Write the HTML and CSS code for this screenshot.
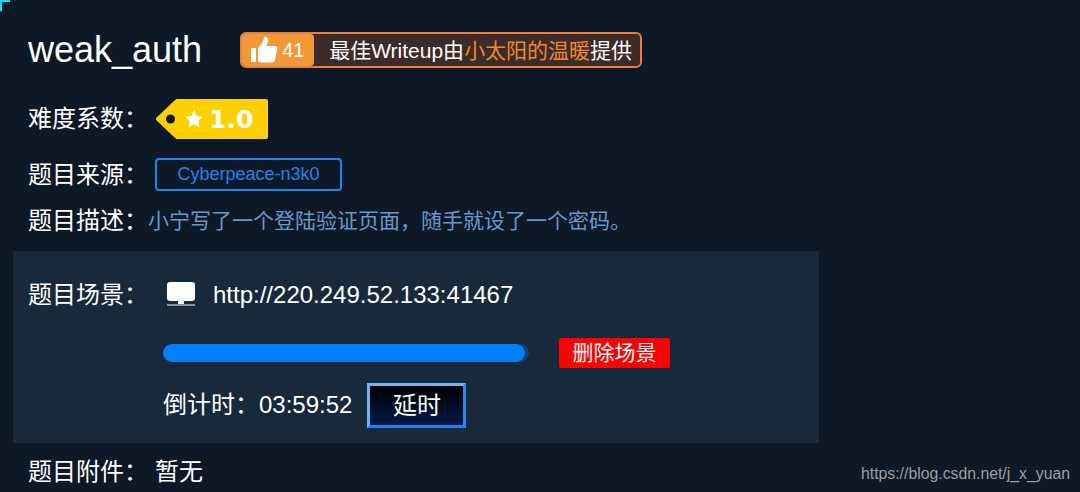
FILE: index.html
```html
<!DOCTYPE html>
<html lang="zh-CN">
<head>
  <meta charset="UTF-8">
  <title>weak_auth</title>
  <link rel="stylesheet" href="styles.css">
</head>
<body>
  <div class="corner"></div>

  <div class="task">
    <div class="title-row">
      <h1>weak_auth</h1>
      <div class="writeup">
        <span class="like">
          <svg class="thumb" viewBox="0 0 28 28" width="28" height="28">
            <path fill="#fff" d="M1 12h5v14H1z"/>
            <path fill="#fff" d="M8 12c3-3 5-6 6-10 0-2 4-2 4 2 0 2-1 5-2 6h8c3 0 4 2 3 4l-2 10c-.5 2-2 2.500-3 2.500H12c-2 0-3-1-4-1.500z"/>
          </svg>
          41
        </span>
        <span class="writeup-text">最佳Writeup由<span class="writeup-name">小太阳的温暖</span>提供</span>
      </div>
    </div>

    <div class="row row-level">
      <span class="label">难度系数&#xFF1A;</span>
      <span class="tag">
        <svg class="tag-shape" viewBox="0 0 112 40" width="112" height="40">
          <path fill="#ffd000" stroke="#ffd000" stroke-width="4" stroke-linejoin="round" d="M2 20L21 2h89v36H21z"/>
          <circle fill="#0d1927" cx="14.500" cy="20" r="4.500"/>
        </svg>
        <svg class="star" viewBox="0 0 20 20" width="20" height="20">
          <path fill="#fff" d="M10 1l2.700 6 6.300.7-4.700 4.300 1.300 6.500L10 15.200 4.400 18.500l1.300-6.500L1 7.700 7.300 7z"/>
        </svg>
        <span class="tag-value">1.0</span>
      </span>
    </div>

    <div class="row row-source">
      <span class="label">题目来源&#xFF1A;</span>
      <span class="source">Cyberpeace-n3k0</span>
    </div>

    <div class="row row-desc">
      <span class="label">题目描述&#xFF1A;</span>
      <span class="desc">小宁写了一个登陆验证页面&#xFF0C;随手就设了一个密码。</span>
    </div>

    <div class="scene">
      <div class="scene-url">
        <span class="label">题目场景&#xFF1A;</span>
        <svg class="monitor" viewBox="0 0 28 24" width="28" height="24">
          <rect fill="#fff" x="0" y="0" width="28" height="19" rx="3"/>
          <path fill="#fff" d="M11 19h6v3h-6zM0 22.500h28v1H0z"/>
        </svg>
        <span class="url">http://220.249.52.133:41467</span>
      </div>
      <div class="scene-progress">
        <div class="progress"><div class="progress-fill"></div></div>
        <button class="delete" type="button">删除场景</button>
      </div>
      <div class="scene-timer">
        <span class="timer">倒计时&#xFF1A;03:59:52</span>
        <button class="delay" type="button">延时</button>
      </div>
    </div>

    <div class="row row-attach">
      <span class="label">题目附件&#xFF1A;</span>
      <span class="attach">暂无</span>
    </div>
  </div>

  <div class="watermark">https://blog.csdn.net/j_x_yuan</div>
</body>
</html>
```

FILE: styles.css
```css
html, body {
  height: 100%;
  overflow: hidden;
}

body {
  margin: 0;
  background-color: #0d1927;
  color: #fff;
  font-family: "Liberation Sans", "Noto Sans CJK SC", sans-serif;
  font-size: 21px;
}

.corner {
  position: absolute;
  left: 0;
  top: 0;
  width: 8px;
  height: 9px;
  border-top: 2px solid #00e5ff;
  border-left: 2px solid #00e5ff;
}

.task {
  width: 806px;
  margin-left: 13px;
}

.title-row {
  display: flex;
  align-items: center;
  height: 36px;
  padding: 32px 0 0 15px;
}

h1 {
  margin: 0 38px 0 0;
  font-size: 36px;
  font-weight: normal;
  line-height: 36px;
}

.writeup {
  display: flex;
  width: 402px;
  height: 36px;
  box-sizing: border-box;
  border: 2px solid #ee7f31;
  border-radius: 6px;
  background-color: #3d2b2a;
}

.like {
  display: flex;
  align-items: center;
  gap: 4px;
  width: 72px;
  padding-left: 8px;
  box-sizing: border-box;
  background-color: #f19938;
  border-radius: 4px;
  font-size: 20px;
}

.writeup-text {
  margin-left: 15px;
  padding-top: 1px;
  line-height: 32px;
  white-space: nowrap;
}

.writeup-name {
  color: #ee8a2e;
}

.row {
  display: flex;
  align-items: center;
  padding-left: 15px;
}

.label {
  font-size: 24px;
  line-height: 30px;
  white-space: nowrap;
}

.row-level {
  height: 40px;
  padding-top: 31px;
}

.tag {
  display: flex;
  align-items: center;
  position: relative;
  width: 112px;
  height: 40px;
  box-sizing: border-box;
  margin-left: 8px;
  padding-left: 28px;
}

.tag-shape {
  position: absolute;
  left: 0;
  top: 0;
}

.star {
  position: relative;
}

.tag-value {
  position: relative;
  margin-left: 5px;
  font-family: "DejaVu Sans", sans-serif;
  font-size: 25px;
  font-weight: bold;
}

.row-source {
  height: 33px;
  margin-top: 19px;
}

.source {
  width: 187px;
  height: 33px;
  box-sizing: border-box;
  margin-left: 7px;
  border: 2px solid #1c86ee;
  border-radius: 4px;
  color: #1c86ee;
  font-size: 18px;
  line-height: 29px;
  text-align: center;
}

.row-desc {
  height: 34px;
  margin-top: 13px;
}

.desc {
  color: #6c98c9;
  line-height: 30px;
}

.scene {
  height: 192px;
  margin-top: 13px;
  background-color: #18293c;
  padding-left: 15px;
}

.scene-url {
  display: flex;
  align-items: center;
  height: 28px;
  padding-top: 30px;
}

.monitor {
  margin-left: 19px;
  margin-bottom: 2px;
}

.url {
  margin-left: 18px;
  font-size: 24px;
}

.scene-progress {
  display: flex;
  align-items: center;
  margin: 29px 0 0 135px;
  height: 30px;
}

.progress {
  width: 366px;
  height: 18px;
  border-radius: 9px;
  background-color: #0e4270;
}

.progress-fill {
  width: 362px;
  height: 18px;
  border-radius: 9px;
  background-color: #0080ff;
}

.delete {
  width: 111px;
  height: 30px;
  margin-left: 30px;
  padding: 0;
  border: none;
  border-radius: 2px;
  background-color: #f00;
  color: #fff;
  font: inherit;
  line-height: 30px;
}

.scene-timer {
  display: flex;
  align-items: center;
  margin: 15px 0 0 135px;
  font-size: 24px;
}

.timer {
  margin-bottom: 1px;
  line-height: 30px;
  white-space: nowrap;
}

.delay {
  width: 99px;
  height: 45px;
  margin-left: 15px;
  padding: 0 0 5px;
  border: 3px solid;
  border-color: #6fb5f5 #2a8af0 #1c80f0 #6fb5f5;
  background: linear-gradient(to bottom, #000 0%, #001a47 100%);
  color: #fff;
  font: inherit;
  font-size: 24px;
}

.row-attach {
  margin-top: 12px;
  height: 34px;
}

.attach {
  margin-left: 7px;
  font-size: 24px;
  line-height: 30px;
}

.watermark {
  position: absolute;
  right: 10px;
  bottom: 9px;
  color: #9a9fa6;
  font-size: 15.8px;
}
```
